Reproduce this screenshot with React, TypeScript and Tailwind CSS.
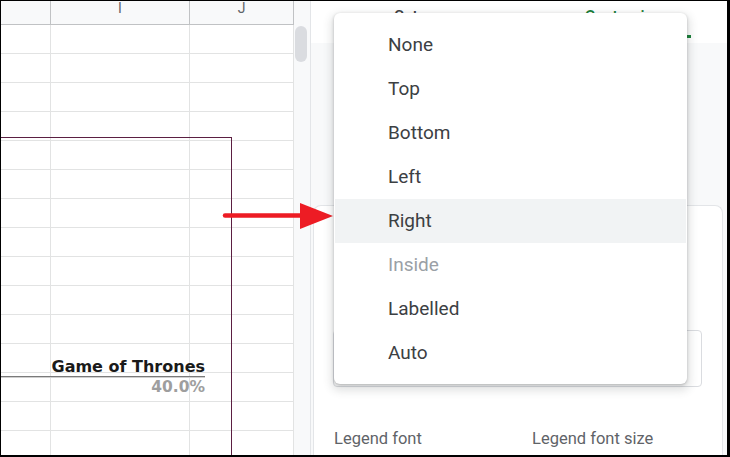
import React from "react";

// ─── Datos ────────────────────────────────────────────────────────────────────

const opciones = ["None", "Top", "Bottom", "Left", "Right", "Inside", "Labelled", "Auto"];
const filas = Array.from({ length: 15 }, (_, i) => i);

// ─── Hoja de cálculo ──────────────────────────────────────────────────────────

function Hoja() {
  return (
    <div className="w-[293px] shrink-0 flex flex-col">
      {/* Cabecera de columnas */}
      <div className="flex h-[24px] shrink-0 bg-[#f8f9fa] border-b border-[#c0c2c4] text-[14px] text-[#5f6368] leading-[14px]">
        <div className="w-[50px] border-r border-[#c0c2c4]" />
        <div className="w-[139px] border-r border-[#c0c2c4] text-center">I</div>
        <div className="w-[104px] border-r border-[#c0c2c4] text-center">J</div>
      </div>

      {/* Celdas */}
      {filas.map((f) => (
        <div key={f} className="flex h-[29px] shrink-0 border-b border-[#e2e3e3]">
          <div className="w-[50px] border-r border-[#e2e3e3]" />
          <div className="w-[139px] border-r border-[#e2e3e3]" />
          <div className="w-[104px] border-r border-[#e2e3e3]" />
        </div>
      ))}
    </div>
  );
}

// ─── Panel lateral ────────────────────────────────────────────────────────────

function Panel() {
  return (
    <div className="flex-1 flex flex-col border-l border-[#e3e5e8]">
      {/* Pestañas */}
      <div className="h-[42px] shrink-0 bg-white flex items-start pt-[6px] text-[16px] font-medium leading-[20px]">
        <div className="flex-1 flex justify-center">
          <span className="text-[#3c4043] pb-[8px]">Setup</span>
        </div>
        <div className="flex-1 flex justify-center">
          <span className="w-[136px] text-center text-[#188038] pb-[8px] border-b-[3px] border-[#188038]">
            Customize
          </span>
        </div>
      </div>

      {/* Cuerpo */}
      <div className="flex-1 bg-[#f8f9fa] pt-[162px] pl-[2px] pr-[4px] flex flex-col">
        <div className="flex-1 bg-white rounded-t-lg border border-b-0 border-[#e3e5e8] pt-[94px]">
          <p className="ml-[20px] h-[20px] mb-[10px] text-[14px] text-[#5f6368]">Position</p>
          <div className="ml-[19px] mr-[20px] h-[57px] rounded-[4px] border border-[#dadce0] bg-white" />
          <div className="flex mt-[42px] ml-[20px] text-[16.5px] leading-[20px] text-[#5f6368]">
            <span className="w-[198px]">Legend font</span>
            <span>Legend font size</span>
          </div>
        </div>
      </div>
    </div>
  );
}

// ─── Menú desplegable ─────────────────────────────────────────────────────────

function Menu() {
  return (
    <div className="absolute left-[333px] top-[12px] w-[353px] h-[371px] bg-white rounded-[6px] pt-[10px] px-px shadow-[0_1px_3px_rgba(60,64,67,0.3),0_4px_8px_3px_rgba(60,64,67,0.15)]">
      {opciones.map((o) => (
        <div
          key={o}
          className={`h-[44px] flex items-center pl-[53px] text-[19px] ${
            o === "Right" ? "bg-[#f1f3f4]" : ""
          } ${o === "Inside" ? "text-[#9aa0a6]" : "text-[#3c4043]"}`}
        >
          {o}
        </div>
      ))}
    </div>
  );
}

// ─── Página ───────────────────────────────────────────────────────────────────

export default function App() {
  return (
    <div className="w-[730px] h-[457px] relative overflow-hidden bg-white border-black border-t border-l border-r-[3px] border-b-2 flex font-['Roboto',sans-serif]">
      <Hoja />

      {/* Barra de desplazamiento */}
      <div className="w-[16px] shrink-0 bg-[#f8f9fa] pt-[25px] pl-[1px]">
        <div className="w-[12px] h-[36px] rounded-full bg-[#dadce0]" />
      </div>

      <Panel />

      {/* Gráfico */}
      <div className="absolute left-[-3px] top-[136px] w-[234px] h-[400px] border border-[#5b1f42]">
        <div className="absolute left-0 top-[219px] w-[206px] flex flex-col items-end font-['DejaVu_Sans',sans-serif] font-bold text-[16px] leading-[19px]">
          <span className="text-[#1a1a1a]">Game of Thrones</span>
          <div className="w-full h-[2px] border-t border-[#7a7a7a] bg-[#cfcfcf]" />
          <span className="text-[#9e9e9e] text-[15.5px]">40.0%</span>
        </div>
      </div>

      {/* Flecha */}
      <svg className="absolute left-[221px] top-[201px]" width="112" height="28" viewBox="0 0 112 28">
        <line x1="3" y1="13.5" x2="82" y2="13.5" stroke="#ed1c24" strokeWidth="4.5" strokeLinecap="round" />
        <polygon points="78,1 111,14 78,27" fill="#ed1c24" />
      </svg>

      <Menu />
    </div>
  );
}
